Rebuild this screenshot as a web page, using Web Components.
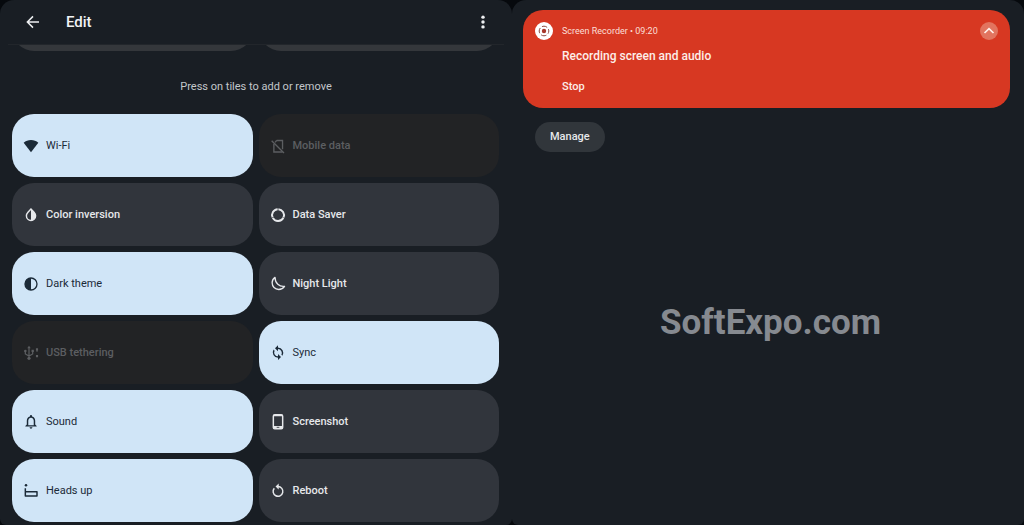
<!DOCTYPE html>
<html lang="en">
<head>
<meta charset="utf-8">
<meta name="viewport" content="width=device-width, initial-scale=1">
<title>Edit tiles</title>
<style>
html { background: #06090d; }
body { margin: 0; font-family: Roboto, "Liberation Sans", sans-serif; color: #e3e6ea; }
</style>
</head>
<body>
<app-screens>
  <edit-panel slot="left">
    <qs-tile icon="wifi" state="on">Wi-Fi</qs-tile>
    <qs-tile icon="nosim" state="off">Mobile data</qs-tile>
    <qs-tile icon="invert">Color inversion</qs-tile>
    <qs-tile icon="saver">Data Saver</qs-tile>
    <qs-tile icon="contrast" state="on">Dark theme</qs-tile>
    <qs-tile icon="moon">Night Light</qs-tile>
    <qs-tile icon="usb" state="off">USB tethering</qs-tile>
    <qs-tile icon="sync" state="on">Sync</qs-tile>
    <qs-tile icon="bell" state="on">Sound</qs-tile>
    <qs-tile icon="phone">Screenshot</qs-tile>
    <qs-tile icon="headsup" state="on">Heads up</qs-tile>
    <qs-tile icon="reboot">Reboot</qs-tile>
  </edit-panel>
  <shade-panel slot="right">
    <recorder-card app="Screen Recorder" time="09:20" action="Stop">Recording screen and audio</recorder-card>
    <span slot="brand">SoftExpo.com</span>
  </shade-panel>
</app-screens>

<script>
const ICONS = {
  wifi: '<path fill="currentColor" d="M12 21.500 1 7C4 4.300 7.800 3 12 3s8 1.300 11 4z"/>',
  nosim: '<g fill="none" stroke="currentColor" stroke-width="2"><path d="M10 3.800h8.800V17M7.500 6.500 10 3.800M5.800 9v12h13"/><path d="m2.500 4 18.500 18.500"/></g>',
  invert: '<path fill="none" stroke="currentColor" stroke-width="2.200" d="M12 3 7.500 8c-1.500 1.700-2.400 3.200-2.400 5.200a6.900 6.900 0 0 0 13.800 0c0-2-.9-3.500-2.400-5.200z"/><path fill="currentColor" d="M12 3v17.500a6.900 6.900 0 0 0 6.900-7.300c0-2-.9-3.500-2.400-5.200z"/>',
  saver: '<g fill="none" stroke="currentColor" stroke-width="3"><path d="M12.600 3.200a8.900 8.900 0 0 1 7.700 12.300"/><path d="M20.100 16A8.900 8.900 0 0 1 4.200 16.300"/><path d="M3.900 15.700A8.900 8.900 0 0 1 11.500 3.200"/></g>',
  contrast: '<circle cx="12" cy="12" r="9" fill="none" stroke="currentColor" stroke-width="2"/><path fill="currentColor" d="M12 3v18a9 9 0 0 1 0-18z"/>',
  moon: '<path fill="none" stroke="currentColor" stroke-width="2" stroke-linejoin="round" d="M7.500 2C5 3.700 3.200 6.700 3.200 10.300c0 5.500 4.300 9.900 9.900 9.900 3.600 0 6.800-1.700 8.700-4.700C14 16.500 7.500 11 7.500 2z"/>',
  usb: '<g fill="none" stroke="currentColor" stroke-width="1.800"><path d="M9 4v14M3.500 9v4.500L9 16.500l5.500-3V9"/><path d="M21 7v3M21 15v3"/></g><g fill="currentColor"><path d="m9 1 2.600 4H6.400z"/><circle cx="9" cy="20" r="2.400"/><circle cx="3.500" cy="9" r="1.900"/><path d="M12.800 7h3.500v3.500h-3.500zM19.400 5h3.200v3.200h-3.200zM19.400 15h3.200v3.200h-3.200z"/></g>',
  sync: '<g fill="currentColor"><path d="M12 .5v3.400a8 8 0 0 1 6.700 12.200l-1.600-1.600A5.800 5.800 0 0 0 12 6v3.500L7.500 5z"/><path d="M12 22.500v-3.400A8 8 0 0 1 5.300 6.900l1.600 1.600A5.800 5.800 0 0 0 12 17v-3.500l4.500 4.500z"/></g>',
  bell: '<path fill="currentColor" d="M12 22c1.200 0 2.100-.9 2.100-2.100H9.900c0 1.200.9 2.100 2.100 2.100zM18.300 15.800v-5.600c0-3.200-1.700-5.800-4.700-6.500V3a1.600 1.600 0 0 0-3.200 0v.7c-3 .7-4.700 3.300-4.700 6.500v5.600l-2.200 2.100v1h17v-1zm-2.200 1H7.900v-6.600c0-2.600 1.600-4.700 4.100-4.700s4.100 2.100 4.100 4.700z"/>',
  phone: '<rect x="5" y="1.200" width="14" height="21" rx="2" fill="none" stroke="currentColor" stroke-width="2.200"/><path fill="currentColor" d="M5 1.500h14v2H5zM5 18h14v3.800H5z"/><path stroke="#31353c" stroke-width="1.300" d="M10 20h4"/>',
  headsup: '<circle cx="4.500" cy="3.500" r="1.900" fill="currentColor"/><g fill="none" stroke="currentColor" stroke-width="2.200" stroke-linejoin="round"><path d="M3.500 8v11.500h17.500V13H3.500"/></g>',
  reboot: '<path fill="none" stroke="currentColor" stroke-width="2.200" d="M12 5.300a7.300 7.300 0 1 1-5.600 2.600"/><path fill="currentColor" d="M13 .8v9L8.300 5.300z"/>'
};
const svg = (name) => `<svg viewBox="0 0 24 24" aria-hidden="true">${ICONS[name]}</svg>`;

function define(name, render) {
  customElements.define(name, class extends HTMLElement {
    connectedCallback() {
      if (this.shadowRoot) return;
      const t = document.createElement('template');
      t.innerHTML = render(this);
      this.attachShadow({ mode: 'open' }).append(t.content.cloneNode(true));
    }
  });
}

define('app-screens', () => `
<style>
:host { display: grid; grid-template-columns: 1fr 1fr; min-height: 100vh; }
::slotted(*) { border-radius: 14px 14px 6px 6px; background: #191e24; }
</style>
<slot name="left"></slot><slot name="right"></slot>`);

define('edit-panel', () => `
<style>
:host { display: block; padding-bottom: 3px; }
header { display: flex; align-items: center; height: 44px; padding: 0 20px 0 24px; box-sizing: border-box; }
button { display: grid; place-items: center; width: 18px; height: 18px; padding: 0; border: 0; background: none; color: #eef0f2; }
button svg { width: 18px; height: 18px; }
h1 { flex: 1; margin: 0 0 0 24px; font-size: 15px; line-height: 20px; font-weight: 500; color: #f1f3f5; }
.grid { display: grid; grid-template-columns: 1fr 1fr; gap: 6px; padding: 0 13px 0 12px; }
.peek { height: 6px; margin: 0 8px; padding: 0 5px 0 4px; overflow: hidden; align-content: end; border-top: 1px solid #22262b; }
.peek i { height: 62px; border-radius: 22px; background: #34373b; }
p { margin: 26px 0 17px; font-size: 11px; line-height: 20px; text-align: center; color: #c3c7cb; }
</style>
<header>
  <button aria-label="Back"><svg viewBox="0 0 24 24"><path fill="none" stroke="currentColor" stroke-width="2" d="M20 12H5M12 4.500 4.500 12l7.500 7.500"/></svg></button>
  <h1>Edit</h1>
  <button aria-label="More options"><svg viewBox="0 0 24 24" fill="currentColor"><circle cx="12" cy="5.500" r="2.300"/><circle cx="12" cy="12" r="2.300"/><circle cx="12" cy="18.500" r="2.300"/></svg></button>
</header>
<div class="grid peek"><i></i><i></i></div>
<p>Press on tiles to add or remove</p>
<div class="grid"><slot></slot></div>`);

define('qs-tile', (el) => `
<style>
:host { display: block; }
button { display: flex; align-items: center; gap: 7px; width: 100%; height: 63px; padding: 0 11px; border: 0; border-radius: 22px; background: #31353c; color: #e6e8eb; font: 500 11px/16px Roboto, "Liberation Sans", sans-serif; text-align: left; }
:host([state="on"]) button { background: #d0e5f7; color: #1b2a38; font-weight: 400; }
:host([state="off"]) button { background: #222325; color: #5c5e61; }
svg { width: 16px; height: 16px; flex: none; }
</style>
<button ${el.getAttribute('state') === 'off' ? 'disabled' : ''}>${svg(el.getAttribute('icon'))}<span><slot></slot></span></button>`);

define('shade-panel', () => `
<style>
:host { display: block; padding: 10px 14px 0 11px; }
button { display: block; height: 30px; margin: 14px 0 0 12px; padding: 0 15px; border: 0; border-radius: 15px; background: #31363b; color: #e6e8ea; font: 500 11px/16px Roboto, "Liberation Sans", sans-serif; }
.brand { margin: 149px 0 0 8px; font-size: 35px; line-height: 44px; font-weight: 700; text-align: center; color: #868a90; }
</style>
<slot></slot>
<button>Manage</button>
<div class="brand"><slot name="brand"></slot></div>`);

define('recorder-card', (el) => `
<style>
:host { display: grid; grid-template-columns: 18px 1fr 18px; column-gap: 9px; align-items: center; padding: 12px; border-radius: 20px; background: #d73822; color: #fdeee9; }
svg { display: block; width: 18px; height: 18px; }
.meta { font-size: 9px; line-height: 18px; color: #fbdfd7; }
h2 { grid-column: 2; margin: 7px 0 13px; font-size: 12px; line-height: 18px; font-weight: 500; }
button { border: 0; padding: 0; background: none; color: inherit; }
.stop { grid-column: 2; justify-self: start; font: 500 11px/18px Roboto, "Liberation Sans", sans-serif; }
</style>
<svg viewBox="0 0 18 18" aria-hidden="true"><circle cx="9" cy="9" r="9" fill="#fff"/><circle cx="9" cy="9" r="2.200" fill="#a8382b"/><circle cx="9" cy="9" r="4.800" fill="none" stroke="#8c4a42" stroke-width="1" stroke-dasharray="5.500 2.040" stroke-dashoffset="2.700"/></svg>
<div class="meta">${el.getAttribute('app')} • <time>${el.getAttribute('time')}</time></div>
<button aria-label="Collapse"><svg viewBox="0 0 18 18"><circle cx="9" cy="9" r="9" fill="#e2745f"/><path fill="none" stroke="#fff0ea" stroke-width="1.700" d="m4.500 11 4.500-4.300 4.500 4.300"/></svg></button>
<h2><slot></slot></h2>
<button class="stop">${el.getAttribute('action')}</button>`);
</script>
</body>
</html>
